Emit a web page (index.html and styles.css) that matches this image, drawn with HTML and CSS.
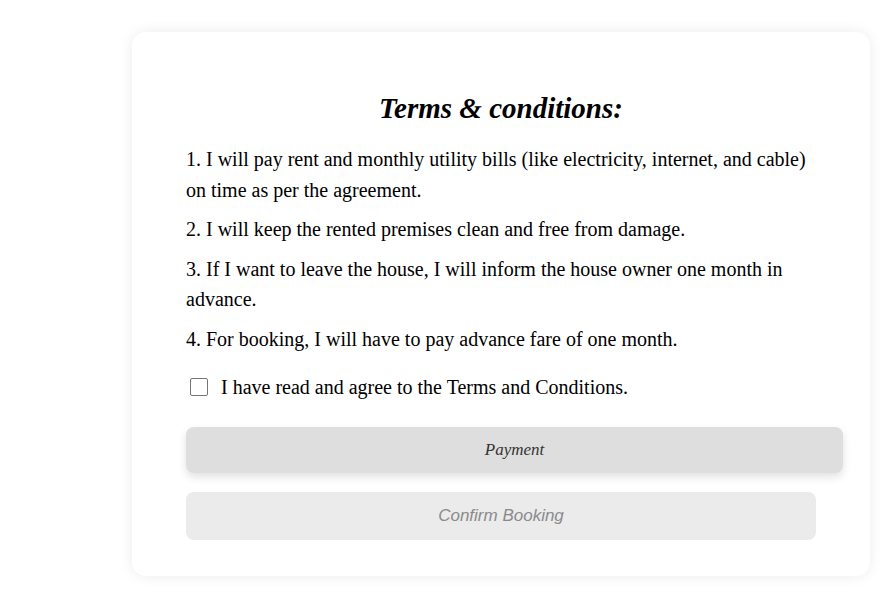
FILE: index.html
```html
<!DOCTYPE html>
<html>
<head>
<meta charset="utf-8">
<link rel="stylesheet" href="styles.css">
</head>
<body>
<div class="page">
  <div class="card">
    <h2 class="title">Terms &amp; conditions:</h2>
    <div class="terms">
      <p>1. I will pay rent and monthly utility bills (like electricity, internet, and cable) on time as per the agreement.</p>
      <p>2. I will keep the rented premises clean and free from damage.</p>
      <p>3. If I want to leave the house, I will inform the house owner one month in advance.</p>
      <p>4. For booking, I will have to pay advance fare of one month.</p>
    </div>
    <label class="agree"><span class="box"></span><span>I have read and agree to the Terms and Conditions.</span></label>
    <button class="btn pay">Payment</button>
    <button class="btn confirm">Confirm Booking</button>
  </div>
</div>
</body>
</html>
```

FILE: styles.css
```css
html, body {
  margin: 0;
  padding: 0;
  background: #fff;
}
body {
  font-family: "Liberation Serif", "Times New Roman", serif;
  color: #000;
}
.page {
  padding: 32px 12px 31px 132px;
}
.card {
  width: 738px;
  box-sizing: border-box;
  background: #fff;
  border-radius: 14px;
  box-shadow: 0 0 14px rgba(0,0,0,0.08);
  padding: 58px 54px 36px 54px;
}
.title {
  margin: 0 0 18px;
  text-align: center;
  font-size: 29px;
  font-style: italic;
  font-weight: bold;
  line-height: 36px;
}
.terms p {
  margin: 0 0 9px;
  font-size: 20px;
  line-height: 30.5px;
}
.agree {
  display: flex;
  align-items: center;
  gap: 13px;
  margin: 18px 0 0 4px;
  font-size: 20px;
  line-height: 30px;
}
.box {
  width: 16px;
  height: 16px;
  border: 1px solid #767676;
  border-radius: 2px;
  background: #fff;
}
.btn {
  display: block;
  border: none;
  border-radius: 8px;
  text-align: center;
  font-style: italic;
  padding: 0;
}
.pay {
  margin-top: 25px;
  width: calc(100% + 27px);
  height: 46px;
  background: #dedede;
  color: #333;
  font-family: "Liberation Serif", serif;
  font-size: 17px;
  box-shadow: 0 4px 8px rgba(0,0,0,0.12);
}
.confirm {
  margin-top: 19px;
  width: 100%;
  height: 48px;
  background: #ebebeb;
  color: #8a8a8a;
  font-family: "Liberation Sans", Arial, sans-serif;
  font-size: 17px;
}
```
